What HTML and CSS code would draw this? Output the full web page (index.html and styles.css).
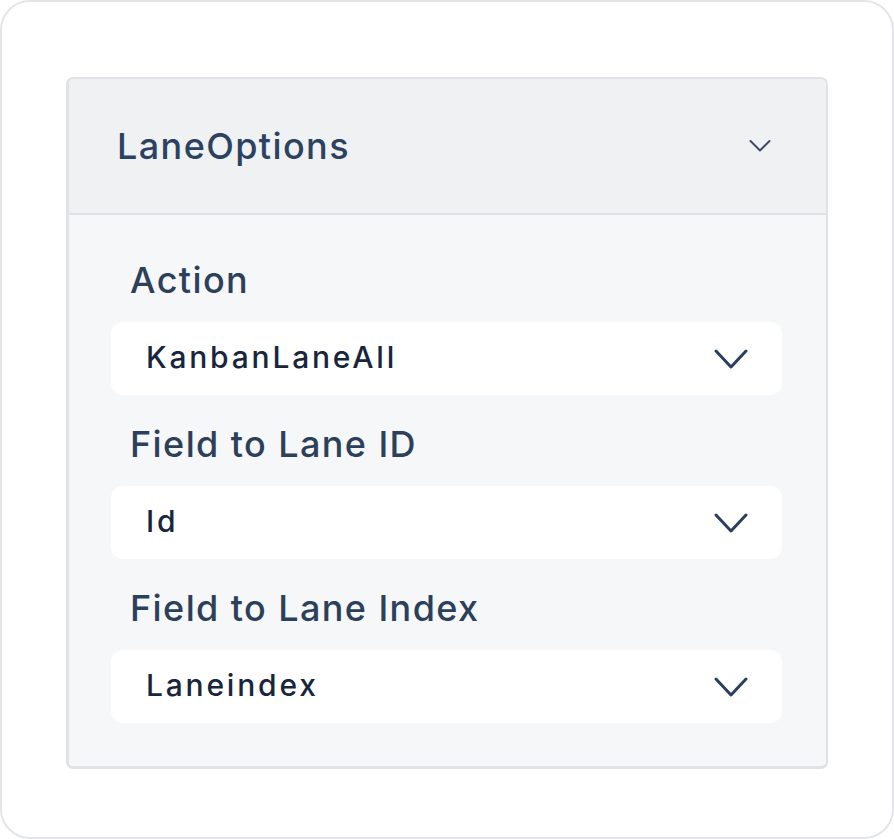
FILE: index.html
```html
<!DOCTYPE html>
<html>
<head>
<meta charset="utf-8">
<link rel="stylesheet" href="styles.css">
</head>
<body>
<div class="frame">
  <div class="card">
    <div class="card-header">
      <span class="title">LaneOptions</span>
      <svg class="hdr-chev" width="22" height="14" viewBox="0 0 22 14"><path d="M1.5 2 L11 11.5 L20.5 2" fill="none" stroke="#3a4e68" stroke-width="2" stroke-linecap="round" stroke-linejoin="round"/></svg>
    </div>
    <div class="card-body">
      <div class="field">
        <div class="label">Action</div>
        <div class="select"><span class="value">KanbanLaneAll</span>
          <svg width="34" height="22" viewBox="0 0 34 22"><path d="M2 3 L17 19 L32 3" fill="none" stroke="#2a3f5c" stroke-width="3" stroke-linecap="round" stroke-linejoin="round"/></svg>
        </div>
      </div>
      <div class="field">
        <div class="label">Field to Lane ID</div>
        <div class="select"><span class="value">Id</span>
          <svg width="34" height="22" viewBox="0 0 34 22"><path d="M2 3 L17 19 L32 3" fill="none" stroke="#2a3f5c" stroke-width="3" stroke-linecap="round" stroke-linejoin="round"/></svg>
        </div>
      </div>
      <div class="field">
        <div class="label">Field to Lane Index</div>
        <div class="select"><span class="value">Laneindex</span>
          <svg width="34" height="22" viewBox="0 0 34 22"><path d="M2 3 L17 19 L32 3" fill="none" stroke="#2a3f5c" stroke-width="3" stroke-linecap="round" stroke-linejoin="round"/></svg>
        </div>
      </div>
    </div>
  </div>
</div>
</body>
</html>
```
FILE: styles.css
```css
html, body {
  margin: 0;
  padding: 0;
  background: #ffffff;
  font-family: Inter, "Noto Sans", sans-serif;
}
.frame {
  box-sizing: border-box;
  width: 894px;
  height: 839px;
  border: 2px solid #e3e5e9;
  border-radius: 30px;
  padding: 75px 0 0 64px;
}
.card {
  box-sizing: border-box;
  width: 762px;
  border: 2px solid #e0e2e6;
  border-left-width: 3px;
  border-bottom-width: 3px;
  border-radius: 7px;
  overflow: hidden;
  background: #f6f7f9;
}
.card-header {
  height: 134px;
  background: #f0f1f3;
  border-bottom: 2px solid #dfe1e5;
  display: flex;
  align-items: center;
  justify-content: space-between;
  padding: 0 55px 0 48px;
}
.title {
  font-size: 36px;
  font-weight: 500;
  color: #2b4361;
  letter-spacing: 1.4px;
}
.card-body {
  padding: 42px 44px 43px 42px;
  display: flex;
  flex-direction: column;
  gap: 26px;
}
.label {
  font-size: 36px;
  line-height: 46px;
  font-weight: 500;
  color: #2c4059;
  padding-left: 19px;
  margin-bottom: 19px;
  letter-spacing: 1.4px;
}
.select {
  height: 73px;
  background: #ffffff;
  border-radius: 12px;
  display: flex;
  align-items: center;
  justify-content: space-between;
  padding: 0 34px 0 35px;
  font-size: 30px;
  font-weight: 500;
  color: #18263d;
  letter-spacing: 2.8px;
}
.value {
  margin-bottom: 4px;
}
.select svg {
  display: block;
}
```
